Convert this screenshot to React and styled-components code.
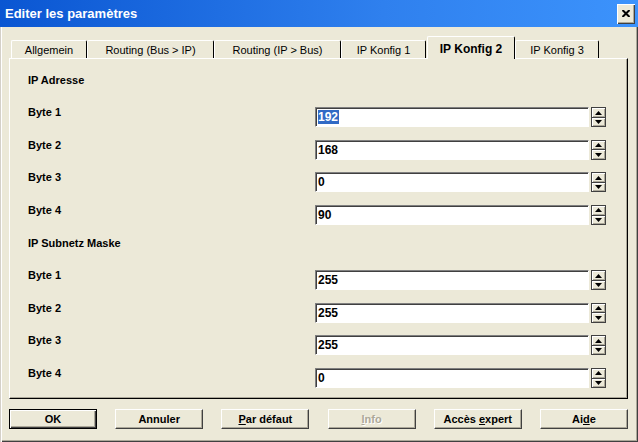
import React from "react";
import styled, { createGlobalStyle } from "styled-components";

const GlobalStyle = createGlobalStyle`
html, body {
    margin:0;
    padding:0;
    background:#ECE9D8;
}
body {
    font-family:"Liberation Sans", Arial, sans-serif;
    font-size:11px;
    color:#000;
}
`;

const Window = styled.div`
width:638px;
height:442px;
display:flex;
flex-direction:column;
background:#ECE9D8;
overflow:hidden;
`;

const TitleBar = styled.div`
height:27px;
flex-shrink:0;
display:flex;
align-items:center;
justify-content:space-between;
padding:0 3px 0 5px;
box-sizing:border-box;
background:linear-gradient(to right, #0A56D2, #2F80EE 60%, #3C93FC);
`;

const Title = styled.div`
color:#fff;
font-weight:bold;
font-size:13px;
`;

const CloseButton = styled.div`
width:18px;
height:20px;
display:flex;
align-items:center;
justify-content:center;
background:#ECE9D8;
box-shadow: inset 1px 1px #fff, inset -1px -1px #404040, inset -2px -2px #ACA899;
`;

const Body = styled.div`
flex:1;
display:flex;
flex-direction:column;
padding:9px 10px 0 9px;
box-shadow: inset 1px 0 #D4D0C8, inset 2px 0 #fff, inset -1px -1px #404040, inset -2px -2px #ACA899;
`;

const TabStrip = styled.div`
height:22px;
display:flex;
align-items:flex-end;
padding-left:2px;
position:relative;
z-index:1;
`;

const Tab = styled.div`
width:${({ $w }) => $w}px;
height:${({ $active }) => ($active ? 23 : 18)}px;
margin-bottom:${({ $active }) => ($active ? -1 : 0)}px;
margin-left:${({ $gap }) => $gap || 0}px;
box-sizing:border-box;
display:flex;
align-items:center;
justify-content:center;
padding-top:${({ $active }) => ($active ? 2 : 0)}px;
background:#ECE9D8;
border-top:1px solid #fff;
border-left:1px solid #fff;
border-right:1px solid #000;
border-radius:2px 2px 0 0;
font-weight:${({ $active }) => ($active ? "bold" : "normal")};
font-size:${({ $active }) => ($active ? 12 : 11)}px;
white-space:nowrap;
`;

const Panel = styled.div`
height:341px;
box-sizing:border-box;
border:1px solid;
border-color:#fff #000 #000 #fff;
box-shadow: inset -1px -1px #ACA899;
display:flex;
flex-direction:column;
padding:4.7px 21px 0 18px;
`;

const Row = styled.div`
height:32.6px;
flex-shrink:0;
display:flex;
align-items:flex-start;
`;

const Label = styled.div`
flex:1;
margin-top:10px;
line-height:13px;
font-weight:bold;
`;

const FieldGroup = styled.div`
display:flex;
margin-top:11px;
gap:2px;
`;

const Field = styled.div`
width:274px;
height:20px;
box-sizing:border-box;
background:#fff;
border:1px solid;
border-color:#808080 #fff #fff #808080;
box-shadow: inset 1px 1px #404040;
padding:0 0 0 2px;
display:flex;
align-items:center;
font-weight:bold;
font-size:12px;
`;

const Selected = styled.span`
background:#316AC5;
color:#fff;
line-height:14px;
padding:0 1px 0 0;
`;

const Spinner = styled.div`
width:15px;
height:20px;
box-sizing:border-box;
border:1px solid #404040;
display:flex;
flex-direction:column;
`;

const SpinButton = styled.div`
flex:1;
display:flex;
align-items:center;
justify-content:center;
background:#ECE9D8;
box-shadow: inset 1px 1px #fff, inset -1px -1px #ACA899;
border-bottom:${({ $top }) => ($top ? "1px solid #404040" : "none")};
`;

const Footer = styled.div`
display:flex;
justify-content:space-between;
margin-top:10px;
`;

const Button = styled.div`
width:88px;
height:20px;
box-sizing:border-box;
display:flex;
align-items:center;
justify-content:center;
font-weight:bold;
background:#ECE9D8;
border:1px solid;
border-color:${({ $default }) => ($default ? "#000" : "#fff #404040 #404040 #fff")};
box-shadow:${({ $default }) =>
        $default ? "inset 1px 1px #fff, inset -1px -1px #404040, inset -2px -2px #ACA899" : "inset -1px -1px #ACA899"};
color:${({ $disabled }) => ($disabled ? "#ACA899" : "#000")};
text-shadow:${({ $disabled }) => ($disabled ? "1px 1px #fff" : "none")};
`;

const Arrow = ({ up }) => (
    <svg width="7" height="4" viewBox="0 0 7 4">
        <path d={up ? "M3.5 0 L7 4 L0 4 Z" : "M0 0 L7 0 L3.5 4 Z"} fill="#000" />
    </svg>
);

const tabs = [
    { label: "Allgemein", w: 76 },
    { label: "Routing (Bus > IP)", w: 127 },
    { label: "Routing (IP > Bus)", w: 127 },
    { label: "IP Konfig 1", w: 85 },
    { label: "IP Konfig 2", w: 88, active: true, gap: 1 },
    { label: "IP Konfig 3", w: 84 },
];

const rows = [
    { header: "IP Adresse" },
    { label: "Byte 1", value: "192", selected: true },
    { label: "Byte 2", value: "168" },
    { label: "Byte 3", value: "0" },
    { label: "Byte 4", value: "90" },
    { header: "IP Subnetz Maske" },
    { label: "Byte 1", value: "255" },
    { label: "Byte 2", value: "255" },
    { label: "Byte 3", value: "255" },
    { label: "Byte 4", value: "0" },
];

const App = () => {
    return (
        <Window>
            <GlobalStyle />
            <TitleBar>
                <Title>Editer les paramètres</Title>
                <CloseButton>
                    <svg width="8" height="7" viewBox="0 0 8 7">
                        <path d="M0.5 0 L7.5 7 M7.5 0 L0.5 7" stroke="#000" strokeWidth="2" />
                    </svg>
                </CloseButton>
            </TitleBar>
            <Body>
                <TabStrip>
                    {tabs.map(t => (
                        <Tab key={t.label} $w={t.w} $active={t.active} $gap={t.gap}>{t.label}</Tab>
                    ))}
                </TabStrip>
                <Panel>
                    {rows.map((r, i) => r.header ? (
                        <Row key={i}><Label>{r.header}</Label></Row>
                    ) : (
                        <Row key={i}>
                            <Label>{r.label}</Label>
                            <FieldGroup>
                                <Field>{r.selected ? <Selected>{r.value}</Selected> : r.value}</Field>
                                <Spinner>
                                    <SpinButton $top><Arrow up /></SpinButton>
                                    <SpinButton><Arrow /></SpinButton>
                                </Spinner>
                            </FieldGroup>
                        </Row>
                    ))}
                </Panel>
                <Footer>
                    <Button $default>OK</Button>
                    <Button>Annuler</Button>
                    <Button><span><u>P</u>ar défaut</span></Button>
                    <Button $disabled><span><u>I</u>nfo</span></Button>
                    <Button><span>Accès <u>e</u>xpert</span></Button>
                    <Button><span>Ai<u>d</u>e</span></Button>
                </Footer>
            </Body>
        </Window>
    );
};

export default App;
